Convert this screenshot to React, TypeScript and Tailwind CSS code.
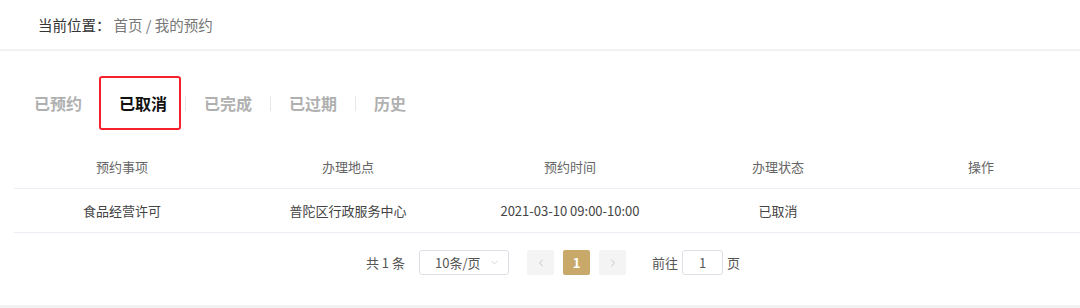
import { ChevronDown, ChevronLeft, ChevronRight } from "lucide-react";

const tabs = ["已预约", "已取消", "已完成", "已过期", "历史"];

const cols = ["预约事项", "办理地点", "预约时间", "办理状态", "操作"];
const rows = [["食品经营许可", "普陀区行政服务中心", "2021-03-10 09:00-10:00", "已取消", ""]];

export default function App() {
  return (
    <div
      className="w-[1080px] h-[308px] bg-white flex flex-col overflow-hidden"
      style={{ fontFamily: '"Noto Sans CJK SC", "Noto Sans", sans-serif' }}
    >
      {/* breadcrumb */}
      <div className="h-[51px] shrink-0 flex items-center pl-[38px] text-[14.5px] border-b-2 border-[#f2f2f2]">
        <span className="text-[#333]">当前位置：</span>
        <span className="ml-[3px] text-[#777]">首页 / 我的预约</span>
      </div>

      {/* tabs */}
      <div className="mt-[25px] pl-[16px] flex items-center h-[54px] shrink-0">
        {tabs.map((t, i) => (
          <div key={t} className="flex items-center h-full">
            {i > 0 && <span className="w-px h-[15px] bg-[#e6e6e6]" />}
            <div
              className={
                "relative h-full flex items-center px-[18px] text-[16px] font-bold " +
                (i === 1 ? "text-[#111]" : "text-[#b0b0b0]")
              }
            >
              {t}
              {i === 1 && (
                <span className="absolute top-0 bottom-0 left-[-2px] right-[4px] border-2 border-[#f5222d] rounded-[3px]" />
              )}
            </div>
          </div>
        ))}
      </div>

      {/* table */}
      <div className="mt-[15px] ml-[14px] text-[13px]">
        <div className="grid grid-cols-[216px_236px_208px_208px_1fr] h-[44px] items-center text-center text-[#666] border-b border-[#ebeef5]">
          {cols.map((c) => (
            <div key={c}>{c}</div>
          ))}
        </div>
        {rows.map((r, i) => (
          <div
            key={i}
            className="grid grid-cols-[216px_236px_208px_208px_1fr] h-[44px] items-center text-center text-[#444] border-b border-[#ebeef5]"
          >
            {r.map((c, j) => (
              <div key={j}>{c}</div>
            ))}
          </div>
        ))}

        {/* pagination */}
        <div className="mt-[17px] pl-[12px] flex items-center justify-center text-[13px] text-[#555]">
          <span>共 1 条</span>
          <div className="ml-[14px] w-[90px] h-[25px] border border-[#dcdfe6] rounded-[3px] flex items-center pl-[15px] pr-[8px] text-[#555]">
            <span className="flex-1">10条/页</span>
            <ChevronDown className="w-[11px] h-[11px] text-[#c0c4cc]" strokeWidth={1.5} />
          </div>
          <div className="ml-[18px] w-[27px] h-[25px] bg-[#f4f4f5] rounded-[2px] flex items-center justify-center">
            <ChevronLeft className="w-[12px] h-[12px] text-[#c0c4cc]" strokeWidth={2} />
          </div>
          <div className="ml-[9px] w-[27px] h-[25px] bg-[#c8a96a] rounded-[2px] flex items-center justify-center text-white font-bold">
            1
          </div>
          <div className="ml-[9px] w-[27px] h-[25px] bg-[#f4f4f5] rounded-[2px] flex items-center justify-center">
            <ChevronRight className="w-[12px] h-[12px] text-[#c0c4cc]" strokeWidth={2} />
          </div>
          <span className="ml-[26px]">前往</span>
          <div className="ml-[4px] w-[41px] h-[25px] border border-[#dcdfe6] rounded-[3px] flex items-center justify-center text-[#555]">
            1
          </div>
          <span className="ml-[4px]">页</span>
        </div>
      </div>

      <div className="mt-auto h-[3px] shrink-0 bg-[#f2f2f2]" />
    </div>
  );
}
